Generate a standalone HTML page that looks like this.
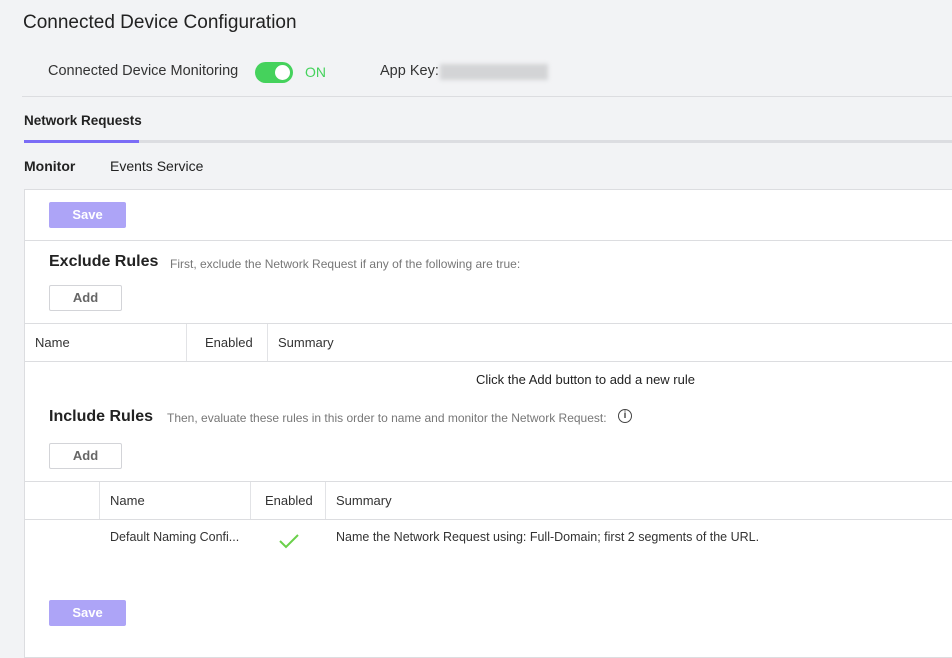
<!DOCTYPE html>
<html><head><style>
body{margin:0;width:952px;height:656px;background:#f2f3f5;font-family:"Liberation Sans",sans-serif;color:#222;position:relative;overflow:hidden}
.a{position:absolute;white-space:nowrap}
.h{border-top:1px solid #dcdde0;position:absolute;left:24px;right:0}
.v{border-left:1px solid #e2e3e6;position:absolute}
.btnp{position:absolute;background:#ada4f7;color:#fff;font-weight:bold;font-size:13px;text-align:center;border-radius:2px;width:77px;height:26px;line-height:26px}
.btn{position:absolute;background:#fff;border:1px solid #d3d4d8;color:#666;font-weight:bold;font-size:13px;text-align:center;border-radius:2px;width:71px;height:24px;line-height:24px}
.t{font-size:13px;color:#333}
</style></head><body>
<div class="a" style="left:23px;top:12px;font-size:19px;color:#222">Connected Device Configuration</div>
<div class="a" style="left:48px;top:63px;font-size:14.5px;color:#333">Connected Device Monitoring</div>
<div class="a" style="left:255px;top:62px;width:38px;height:21px;border-radius:11px;background:#45d25c"><div style="position:absolute;right:3px;top:3px;width:15px;height:15px;border-radius:50%;background:#fff"></div></div>
<div class="a" style="left:305px;top:64px;font-size:14px;color:#45d25c">ON</div>
<div class="a" style="left:380px;top:63px;font-size:14.5px;color:#333">App Key: </div>
<div class="a" style="left:440px;top:64px;width:108px;height:16px;background:#d3d4d6;filter:blur(2px)"></div>
<div class="a" style="left:22px;right:0;top:96px;border-top:1px solid #dcdde0"></div>
<div class="a" style="left:24px;top:113px;font-size:13.5px;font-weight:bold">Network Requests</div>
<div class="a" style="left:24px;right:0;top:140px;height:3px;background:#dcdde1"></div>
<div class="a" style="left:24px;top:140px;width:115px;height:3px;background:#7b6cf6"></div>
<div class="a" style="left:24px;top:158px;font-size:14px;font-weight:bold;color:#222">Monitor</div>
<div class="a" style="left:110px;top:158px;font-size:14px;color:#222">Events Service</div>
<div class="a" style="left:24px;right:-2px;top:189px;bottom:-2px;background:#fff;border:1px solid #dcdde0"></div>
<div class="btnp" style="left:49px;top:202px">Save</div>
<div class="h" style="top:240px"></div>
<div class="a" style="left:49px;top:253px;font-size:16px;font-weight:bold;color:#222">Exclude Rules</div>
<div class="a" style="left:170px;top:257px;font-size:12px;color:#777">First, exclude the Network Request if any of the following are true:</div>
<div class="btn" style="left:49px;top:285px">Add</div>
<div class="h" style="top:323px"></div>
<div class="h" style="top:361px"></div>
<div class="v" style="left:186px;top:324px;height:37px"></div>
<div class="v" style="left:267px;top:324px;height:37px"></div>
<div class="a t" style="left:35px;top:335px">Name</div>
<div class="a t" style="left:205px;top:335px">Enabled</div>
<div class="a t" style="left:278px;top:335px">Summary</div>
<div class="a" style="left:476px;top:372px;font-size:13px;color:#222">Click the Add button to add a new rule</div>
<div class="a" style="left:49px;top:408px;font-size:16px;font-weight:bold;color:#222">Include Rules</div>
<div class="a" style="left:167px;top:411px;font-size:12px;color:#777">Then, evaluate these rules in this order to name and monitor the Network Request:</div>
<div class="a" style="left:618px;top:409px;width:12px;height:12px;border:1.5px solid #444;border-radius:50%;font-size:10px;font-weight:bold;text-align:center;line-height:12px;color:#444">i</div>
<div class="btn" style="left:49px;top:443px">Add</div>
<div class="h" style="top:481px"></div>
<div class="h" style="top:519px"></div>
<div class="v" style="left:99px;top:482px;height:37px"></div>
<div class="v" style="left:250px;top:482px;height:37px"></div>
<div class="v" style="left:325px;top:482px;height:37px"></div>
<div class="a t" style="left:110px;top:493px">Name</div>
<div class="a t" style="left:265px;top:493px">Enabled</div>
<div class="a t" style="left:336px;top:493px">Summary</div>
<div class="a" style="left:110px;top:530px;font-size:12.5px;color:#333">Default Naming Confi...</div>
<svg class="a" style="left:279px;top:533px" width="20" height="16"><path d="M1 8 L7 14 L19 2" stroke="#6ad04a" stroke-width="2" fill="none"/></svg>
<div class="a" style="left:336px;top:530px;font-size:12.5px;color:#333">Name the Network Request using: Full-Domain; first 2 segments of the URL.</div>
<div class="btnp" style="left:49px;top:600px">Save</div>
</body></html>
